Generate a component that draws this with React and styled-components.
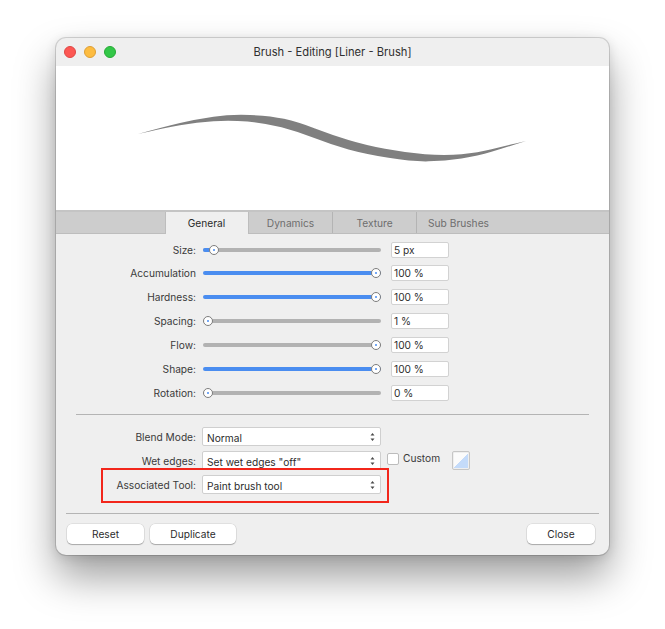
import React from 'react'
import styled, { createGlobalStyle } from 'styled-components'

const GlobalStyle = createGlobalStyle`
  html, body {
    margin: 0;
    background: #ffffff;
  }
  body {
    font-family: Inter, "Liberation Sans", sans-serif;
    font-size: 10.2px;
    color: #2c2c2c;
  }
`

const Page = styled.div`
  width: 665px;
  height: 629px;
  padding: 38px 0 0 56px;
  box-sizing: border-box;
  overflow: hidden;
`

const Window = styled.div`
  position: relative;
  width: 553px;
  height: 517px;
  box-sizing: border-box;
  background: #efefef;
  border-radius: 10px;
  box-shadow: 0 0 0 1px rgba(0, 0, 0, 0.14), 0 22px 40px rgba(0, 0, 0, 0.38), 0 2px 12px rgba(0, 0, 0, 0.12);
`

const TitleBar = styled.div`
  position: relative;
  height: 28px;
  display: flex;
  align-items: center;
  justify-content: center;
  font-size: 11.2px;
  color: #303030;
`

const Lights = styled.div`
  position: absolute;
  left: 8px;
  top: 8px;
  display: flex;
  gap: 8px;
`

const Light = styled.span`
  width: 12px;
  height: 12px;
  box-sizing: border-box;
  border-radius: 50%;
  background: ${p => p.$color};
  border: 1px solid ${p => p.$edge};
`

const Preview = styled.div`
  height: 144px;
  background: #ffffff;
`

const TabBar = styled.div`
  height: 24px;
  box-sizing: border-box;
  display: flex;
  justify-content: center;
  background: #cdcdcd;
  border-top: 2px solid #c4c4c4;
  border-bottom: 1px solid #bdbdbd;
`

const Tab = styled.div`
  width: 84px;
  display: flex;
  align-items: center;
  justify-content: center;
  box-sizing: border-box;
  color: ${p => (p.$active ? '#2a2a2a' : '#6e6e6e')};
  background: ${p => (p.$active ? '#efefef' : 'transparent')};
  margin-bottom: ${p => (p.$active ? '-1px' : '0')};
  border-left: 1px solid ${p => (p.$active ? '#bdbdbd' : 'transparent')};
  border-right: 1px solid ${p => (p.$active ? '#bdbdbd' : p.$plain ? 'transparent' : '#b4b4b4')};
`

const Sliders = styled.div`
  padding-top: 8px;
  display: flex;
  flex-direction: column;
  gap: 8px;
`

const SliderRow = styled.div`
  height: 16px;
  display: flex;
  align-items: center;

  &:first-child {
    margin-bottom: -1px;
  }
`

const Label = styled.div`
  width: 140px;
  flex: none;
  text-align: right;
  color: #3a3a3a;
`

const Track = styled.div`
  position: relative;
  width: 178px;
  height: 4px;
  margin: 0 10px 0 7px;
  border-radius: 2px;
  background: ${p => (p.$on ? '#4a8df0' : '#b2b2b2')};
`

const Fill = styled.div`
  height: 100%;
  border-radius: 2px;
  background: #4a8df0;
`

const Thumb = styled.div`
  position: absolute;
  top: -3px;
  width: 10px;
  height: 10px;
  box-sizing: border-box;
  margin-left: -5px;
  border-radius: 50%;
  background: #ffffff;
  border: 1px solid #7d7d7d;
  display: flex;
  align-items: center;
  justify-content: center;

  &::after {
    content: '';
    width: 2px;
    height: 2px;
    border-radius: 50%;
    background: #4a8df0;
  }
`

const Input = styled.div`
  width: 58px;
  height: 16px;
  box-sizing: border-box;
  padding-left: 2px;
  display: flex;
  align-items: center;
  background: #ffffff;
  border: 1px solid #d2d2d2;
  border-radius: 2px;
  color: #303030;
`

const Divider = styled.div`
  height: 1px;
  background: #b4b4b4;
  margin: ${p => p.$margin};
`

const SelectRows = styled.div`
  display: flex;
  flex-direction: column;
  gap: 5px;
`

const SelectRow = styled.div`
  height: 19px;
  display: flex;
  align-items: center;
`

const Select = styled.div`
  width: 179px;
  height: 19px;
  margin-left: 6px;
  flex: none;
  box-sizing: border-box;
  padding: 0 5px 0 4px;
  display: flex;
  align-items: center;
  justify-content: space-between;
  background: #ffffff;
  border: 1px solid #cfcfcf;
  border-radius: 2px;
  color: #2c2c2c;
`

const SelectText = styled.span`
  padding-top: 3px;
`

const Checkbox = styled.div`
  width: 12px;
  height: 12px;
  box-sizing: border-box;
  margin: -3px 4px 0 6px;
  background: #ffffff;
  border: 1px solid #bcbcbc;
  border-radius: 2px;
`

const CheckLabel = styled.div`
  width: 37px;
  margin-top: -6px;
  color: #3a3a3a;
`

const Swatch = styled.div`
  width: 18px;
  height: 19px;
  margin-left: 12px;
  box-sizing: border-box;
  border: 1px solid #c6c6c6;
  border-radius: 2px;
  background: linear-gradient(to bottom right, #fbfbfb 50%, #c4dbfa 50%);
  background-clip: content-box;
  padding: 1px;
`

const Annotation = styled.div`
  position: absolute;
  left: 45px;
  top: 430px;
  width: 288px;
  height: 35px;
  box-sizing: border-box;
  border: 2px solid #f2261b;
  pointer-events: none;
`

const Footer = styled.div`
  display: flex;
  gap: 6px;
  padding: 0 14px 0 11px;
`

const Button = styled.div`
  width: ${p => p.$width}px;
  height: 20px;
  margin-left: ${p => (p.$right ? 'auto' : '0')};
  display: flex;
  align-items: center;
  justify-content: center;
  background: #ffffff;
  border-radius: 5px;
  box-shadow: 0 0 0 0.5px rgba(0, 0, 0, 0.12), 0 1px 1px rgba(0, 0, 0, 0.25);
  color: #2c2c2c;
`

// edges of the stroke read off the reference, tip to tip
const strokeTop = [[138, 134], [163, 127], [197, 119], [230, 114.3], [270, 115.7], [298, 122], [332, 135], [365, 145], [405, 152.7], [445, 155.7], [478, 152.7], [505, 146], [526, 141]]
const strokeBottom = [[526, 141], [505, 147.7], [478, 156], [445, 161], [412, 161.7], [365, 154], [332, 145], [298, 131.7], [265, 123], [230, 120], [197, 122.3], [163, 128.3], [138, 134]]

const smooth = pts => {
  let d = ''
  for (let i = 1; i < pts.length - 1; i++) {
    const mx = (pts[i][0] + pts[i + 1][0]) / 2
    const my = (pts[i][1] + pts[i + 1][1]) / 2
    d += `Q${pts[i][0]} ${pts[i][1]} ${mx} ${my} `
  }
  const last = pts[pts.length - 1]
  return d + `L${last[0]} ${last[1]} `
}

const BrushStroke = () => (
  <svg width="553" height="144" viewBox="56 66 553 144" style={{ display: 'block' }}>
    <path fill="#808080" d={`M138 134 ${smooth(strokeTop)}${smooth(strokeBottom)}Z`} />
  </svg>
)

const Stepper = () => (
  <svg width="5" height="10" viewBox="0 0 5 10">
    <path fill="#4a4a4a" d="M2.5 1 L4.5 3.5 H0.5 Z M2.5 9 L0.5 6.5 H4.5 Z" />
  </svg>
)

const sliders = [
  { label: 'Size:', value: '5 px', thumb: 11, fill: 8 },
  { label: 'Accumulation', value: '100 %', thumb: 173, on: true },
  { label: 'Hardness:', value: '100 %', thumb: 173, on: true },
  { label: 'Spacing:', value: '1 %', thumb: 5 },
  { label: 'Flow:', value: '100 %', thumb: 173 },
  { label: 'Shape:', value: '100 %', thumb: 173, on: true },
  { label: 'Rotation:', value: '0 %', thumb: 5 },
]

const App = () => {
  return (
    <Page>
      <GlobalStyle />
      <Window>
        <TitleBar>
          <Lights>
            <Light $color="#fc5753" $edge="#df4744" />
            <Light $color="#fdbc40" $edge="#de9f34" />
            <Light $color="#33c748" $edge="#27aa35" />
          </Lights>
          Brush - Editing [Liner - Brush]
        </TitleBar>
        <Preview>
          <BrushStroke />
        </Preview>
        <TabBar>
          <Tab $active>General</Tab>
          <Tab>Dynamics</Tab>
          <Tab>Texture</Tab>
          <Tab $plain>Sub Brushes</Tab>
        </TabBar>
        <Sliders>
          {sliders.map(s => (
            <SliderRow key={s.label}>
              <Label>{s.label}</Label>
              <Track $on={s.on}>
                {s.fill && <Fill style={{ width: s.fill }} />}
                <Thumb style={{ left: s.thumb }} />
              </Track>
              <Input>{s.value}</Input>
            </SliderRow>
          ))}
        </Sliders>
        <Divider $margin="13px 20px 12px 20px" />
        <SelectRows>
          <SelectRow>
            <Label>Blend Mode:</Label>
            <Select><SelectText>Normal</SelectText><Stepper /></Select>
          </SelectRow>
          <SelectRow>
            <Label>Wet edges:</Label>
            <Select><SelectText>Set wet edges "off"</SelectText><Stepper /></Select>
            <Checkbox />
            <CheckLabel>Custom</CheckLabel>
            <Swatch />
          </SelectRow>
          <SelectRow>
            <Label>Associated Tool:</Label>
            <Select><SelectText>Paint brush tool</SelectText><Stepper /></Select>
          </SelectRow>
        </SelectRows>
        <Divider $margin="19px 10px 10px 10px" />
        <Footer>
          <Button $width={77}>Reset</Button>
          <Button $width={86}>Duplicate</Button>
          <Button $width={68} $right>Close</Button>
        </Footer>
        <Annotation />
      </Window>
    </Page>
  )
}

export default App
